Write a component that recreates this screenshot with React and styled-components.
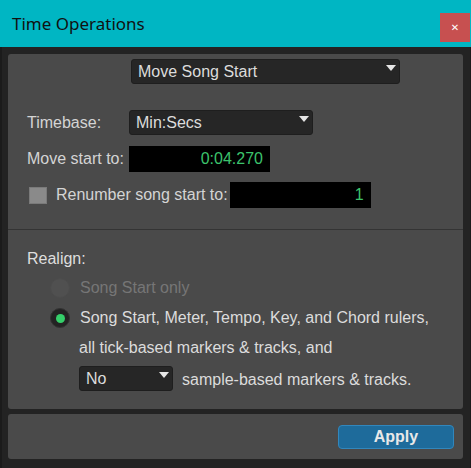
import React from 'react';
import styled, {createGlobalStyle} from 'styled-components';

const GlobalStyle = createGlobalStyle`
  html, body {
    margin: 0;
    padding: 0;
    background: #232323;
  }
  body {
    font-family: 'Liberation Sans', Arial, sans-serif;
    font-size: 16px;
  }
`;

function Dropdown({value, width}) {
  return (
    <StyledSelect $width={width}>
      <span>{value}</span>
      <Arrow />
    </StyledSelect>
  );
}

function Radio({label, checked, disabled}) {
  return (
    <RadioRow $disabled={disabled}>
      <RadioCircle $checked={checked} $disabled={disabled}>
        {checked && <RadioDot />}
      </RadioCircle>
      {label}
    </RadioRow>
  );
}

export default function App() {
  return (
    <Window>
      <GlobalStyle />
      <TitleBar>
        <TitleText>Time Operations</TitleText>
        <CloseButton>✕</CloseButton>
      </TitleBar>
      <Body>
        <Panel>
          <TopSection>
            <ModeRow>
              <Dropdown value='Move Song Start' width={269} />
            </ModeRow>
            <FieldGrid>
              <Label>Timebase:</Label>
              <Dropdown value='Min:Secs' width={184} />
              <Label>Move start to:</Label>
              <NumberField $width={141}>0:04.270</NumberField>
            </FieldGrid>
            <CheckRow>
              <CheckBox />
              <CheckLabel>Renumber song start to:</CheckLabel>
              <NumberField $width={141}>1</NumberField>
            </CheckRow>
          </TopSection>
          <RealignSection>
            <RealignTitle>Realign:</RealignTitle>
            <Radio label='Song Start only' disabled />
            <Radio label='Song Start, Meter, Tempo, Key, and Chord rulers,' checked />
            <Indented>all tick-based markers &amp; tracks, and</Indented>
            <Indented>
              <Dropdown value='No' width={94} />
              <SampleText>sample-based markers &amp; tracks.</SampleText>
            </Indented>
          </RealignSection>
        </Panel>
        <Footer>
          <ApplyButton>Apply</ApplyButton>
        </Footer>
      </Body>
    </Window>
  );
}

const Window = styled.div`
  width: 471px;
  height: 468px;
  display: flex;
  flex-direction: column;
  background: #232323;
  box-sizing: border-box;
`;

const TitleBar = styled.div`
  height: 47px;
  flex: none;
  display: flex;
  align-items: flex-start;
  justify-content: space-between;
  background: #00b6c3;
  padding-left: 12px;
  padding-right: 1px;
  box-sizing: border-box;
`;

const TitleText = styled.div`
  font-family: 'Noto Sans', 'Open Sans', sans-serif;
  font-size: 17px;
  color: #111;
  line-height: 20px;
  margin-top: 14px;
`;

const CloseButton = styled.div`
  width: 30px;
  height: 29px;
  margin-top: 13px;
  background: #c75050;
  color: #fff;
  font-family: 'DejaVu Sans', sans-serif;
  font-weight: bold;
  font-size: 10px;
  display: flex;
  align-items: center;
  justify-content: center;
`;

const Body = styled.div`
  flex: 1;
  display: flex;
  flex-direction: column;
  gap: 5px;
  padding: 7px 7px 8px 6px;
  border-left: 2px solid #1b1b1b;
  border-right: 1px solid #1b1b1b;
  box-sizing: border-box;
`;

const Panel = styled.div`
  background: #4a4a4a;
  border-radius: 3px;
  display: flex;
  flex-direction: column;
`;

const TopSection = styled.div`
  height: 175px;
  box-sizing: border-box;
  padding: 5px 0 0 19px;
`;

const ModeRow = styled.div`
  padding-left: 104px;
  margin-bottom: 26px;
`;

const StyledSelect = styled.div`
  width: ${(p) => p.$width}px;
  height: 25px;
  box-sizing: border-box;
  background: #262626;
  border: 1px solid #1e1e1e;
  border-radius: 3px;
  color: #dcdcdc;
  font-size: 16px;
  line-height: 23px;
  padding-left: 6px;
  position: relative;
  flex: none;
`;

const Arrow = styled.span`
  position: absolute;
  right: 3px;
  top: 5px;
  width: 0;
  height: 0;
  border-left: 5px solid transparent;
  border-right: 5px solid transparent;
  border-top: 6px solid #e6e6e6;
`;

const FieldGrid = styled.div`
  display: grid;
  grid-template-columns: 102px auto;
  row-gap: 11px;
  align-items: center;
  justify-items: start;
`;

const Label = styled.div`
  color: #d4d4d4;
  font-size: 16px;
`;

const NumberField = styled.div`
  width: ${(p) => p.$width}px;
  height: 26px;
  box-sizing: border-box;
  background: #000;
  color: #3cc36c;
  font-size: 16px;
  line-height: 26px;
  text-align: right;
  padding-right: 7px;
  flex: none;
`;

const CheckRow = styled.div`
  display: flex;
  align-items: center;
  margin-top: 10px;
  margin-left: 2px;
`;

const CheckBox = styled.div`
  width: 18px;
  height: 17px;
  box-sizing: border-box;
  background: #8a8a8a;
  border: 1px solid #7a7a7a;
  flex: none;
`;

const CheckLabel = styled.div`
  color: #d4d4d4;
  margin-left: 9px;
  margin-right: 2px;
`;

const RealignSection = styled.div`
  border-top: 1px solid #343434;
  padding: 15px 0 0 19px;
  height: 180px;
  box-sizing: border-box;
`;

const RealignTitle = styled.div`
  color: #dedede;
  height: 28px;
  line-height: 28px;
`;

const RadioRow = styled.div`
  height: 30px;
  display: flex;
  align-items: center;
  gap: 10px;
  padding-left: 23px;
  color: ${(p) => (p.$disabled ? '#767676' : '#dcdcdc')};
`;

const RadioCircle = styled.div`
  width: 20px;
  height: 20px;
  border-radius: 50%;
  box-sizing: border-box;
  background: ${(p) => (p.$disabled ? '#505050' : '#232323')};
  border: 1px solid ${(p) => (p.$disabled ? '#4c4c4c' : '#333')};
  display: flex;
  align-items: center;
  justify-content: center;
`;

const RadioDot = styled.div`
  width: 9px;
  height: 9px;
  border-radius: 50%;
  background: #35cf6a;
`;

const Indented = styled.div`
  height: 30px;
  display: flex;
  align-items: center;
  padding-left: 52px;
  color: #dcdcdc;
`;

const SampleText = styled.span`
  margin-left: 9px;
  margin-top: 3px;
`;

const Footer = styled.div`
  height: 45px;
  background: #4a4a4a;
  border-radius: 3px;
  display: flex;
  align-items: center;
  justify-content: flex-end;
  padding-right: 9px;
`;

const ApplyButton = styled.div`
  width: 116px;
  height: 24px;
  box-sizing: border-box;
  background: #1e6b9b;
  border: 1px solid #3187bd;
  border-radius: 4px;
  color: #e8e8e8;
  font-weight: bold;
  font-size: 16px;
  display: flex;
  align-items: center;
  justify-content: center;
`;
